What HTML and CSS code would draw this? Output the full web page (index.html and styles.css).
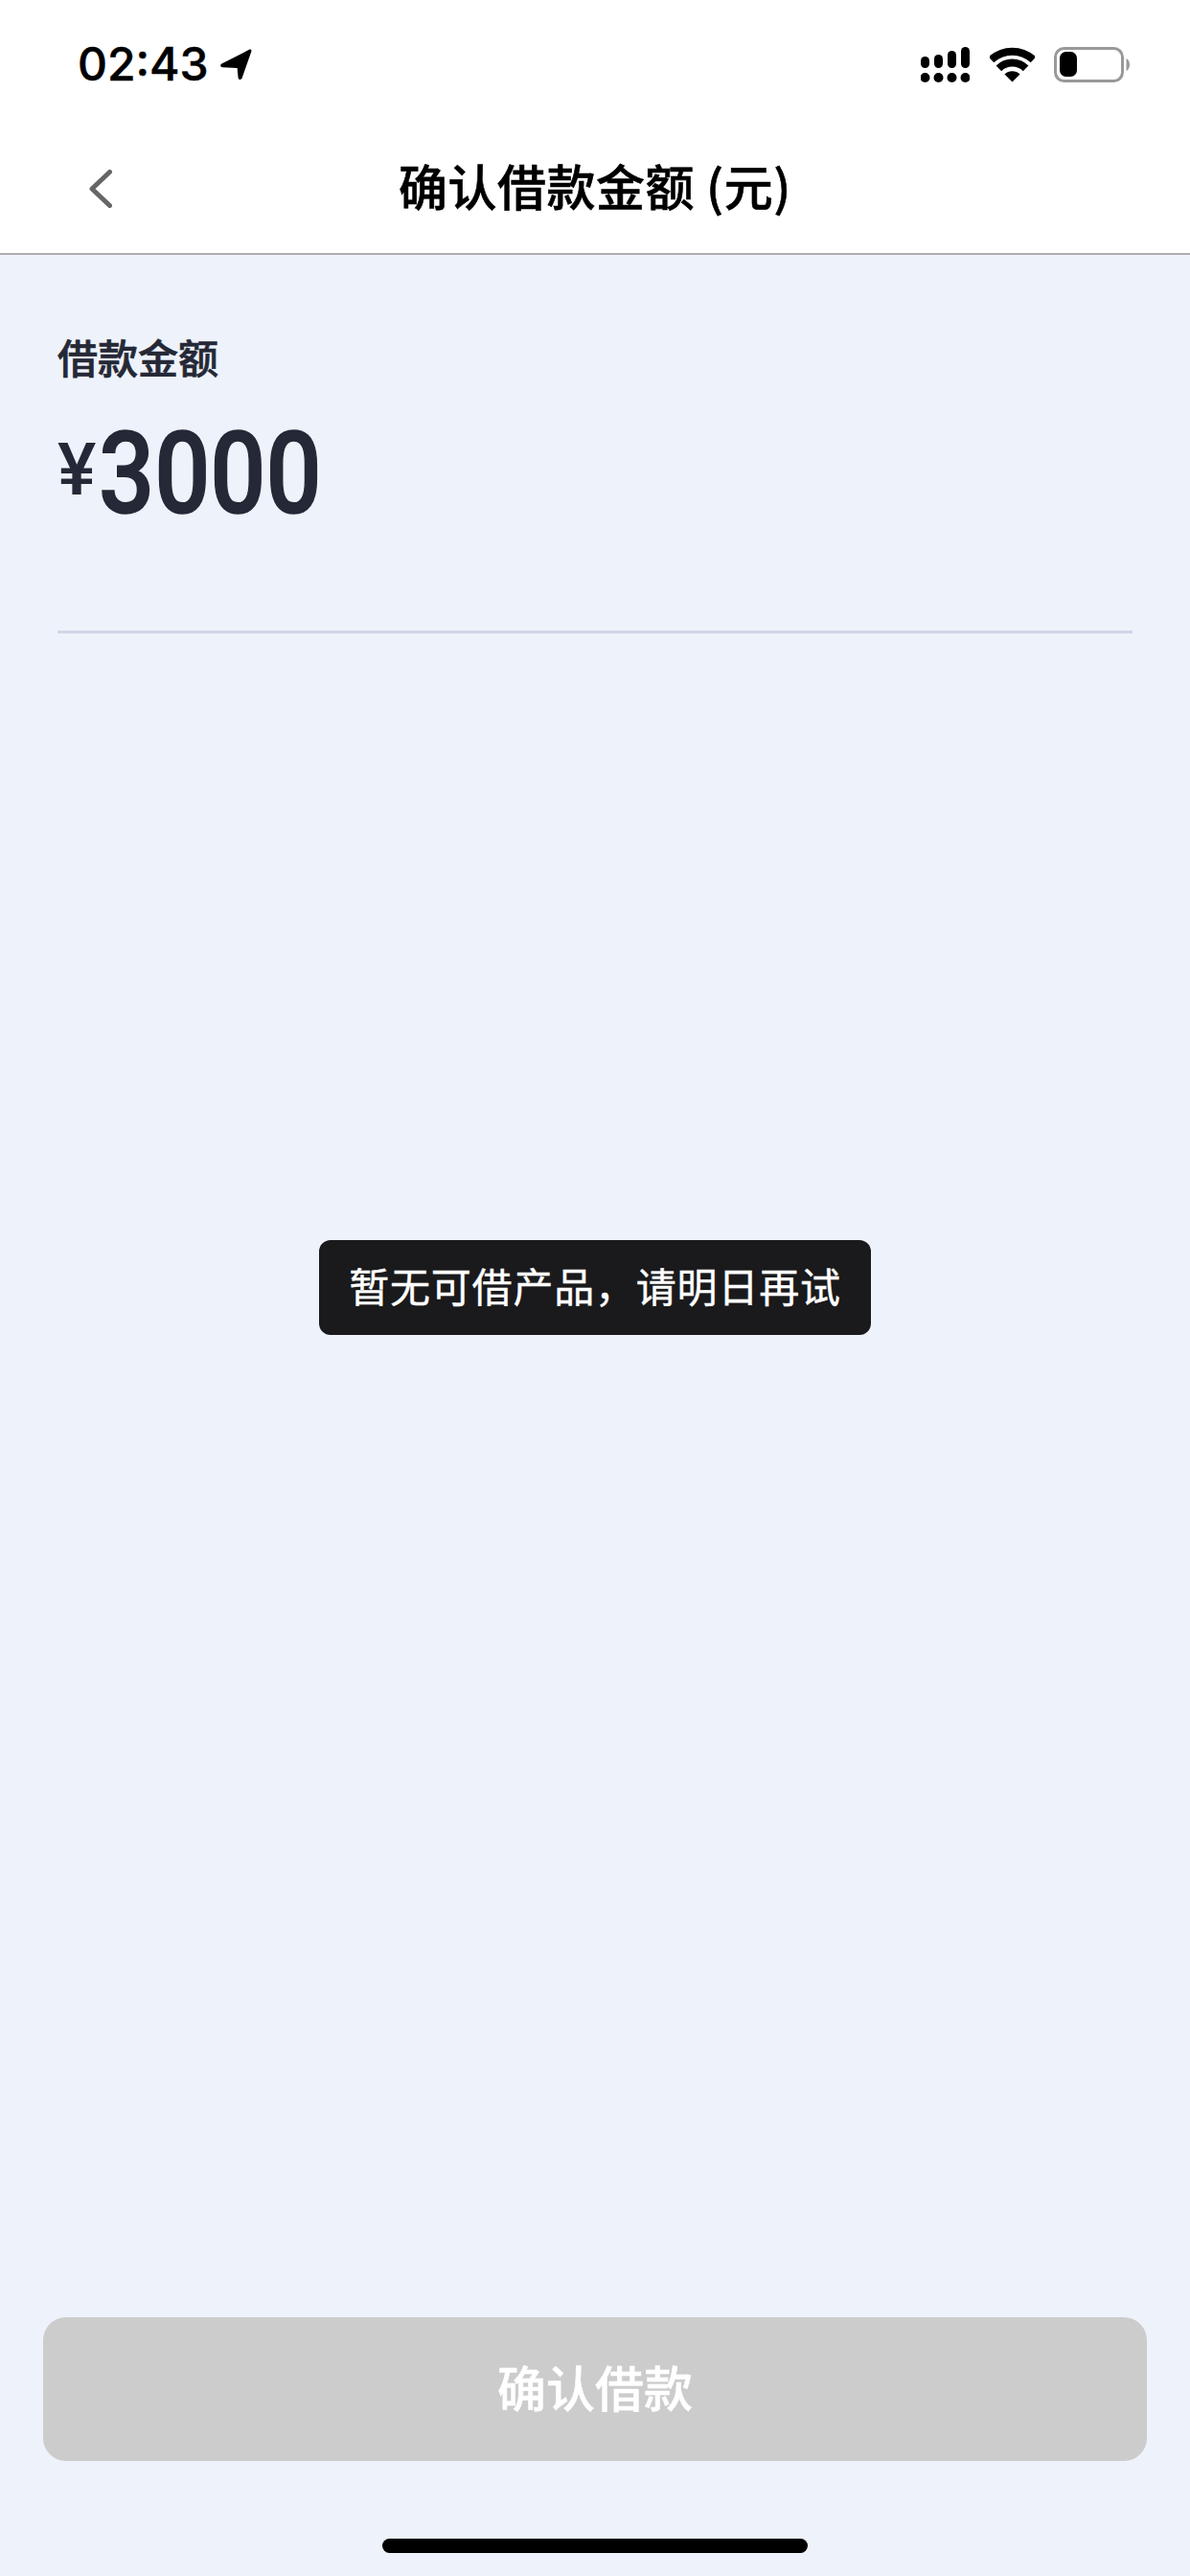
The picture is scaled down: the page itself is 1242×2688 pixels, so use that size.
FILE: index.html
```html
<!DOCTYPE html>
<html lang="zh-CN">
<head>
<meta charset="utf-8">
<title>确认借款金额 (元)</title>
<link rel="stylesheet" href="styles.css">
</head>
<body>
<div class="page">
  <header class="top">
    <div class="status">
      <div class="status-left">
        <span class="time">02:43</span>
        <svg class="loc" width="33" height="33" viewBox="0 0 33 33"><path d="M30.5 0.6 C31.8 0.2 32.8 1.2 32.4 2.5 L22.6 30.6 C21.9 32.6 18.9 32.6 18.6 30.3 L17.6 20 L2.2 19.2 C0 19 -0.6 16.5 1.4 15.4 Z" fill="#000"/></svg>
      </div>
      <div class="status-right">
        <svg class="signal" width="51" height="37" viewBox="0 0 51 37" fill="#000">
          <rect x="0" y="10" width="9" height="12" rx="4.5"/>
          <rect x="14" y="8" width="9" height="14" rx="4.5"/>
          <rect x="28" y="4" width="9" height="18" rx="4.5"/>
          <rect x="42" y="0" width="9" height="22" rx="4.5"/>
          <circle cx="4.5" cy="32" r="5"/>
          <circle cx="18.5" cy="32" r="5"/>
          <circle cx="32.5" cy="32" r="5"/>
          <circle cx="46.5" cy="32" r="5"/>
        </svg>
        <svg class="wifi" width="47" height="37" viewBox="0 0 47 37">
          <path d="M1.5 13.4 A32 32 0 0 1 45.5 13.4" fill="none" stroke="#000" stroke-width="8"/>
          <path d="M9.4 22.4 A20 20 0 0 1 37.6 22.4" fill="none" stroke="#000" stroke-width="8"/>
          <path d="M23.5 36.5 L15.5 28.5 A11.5 11.5 0 0 1 31.5 28.5 Z" fill="#000"/>
        </svg>
        <svg class="battery" width="79" height="37" viewBox="0 0 79 37">
          <rect x="1.5" y="1.5" width="70" height="34" rx="9" fill="#fff" stroke="#999" stroke-width="3"/>
          <rect x="6" y="5" width="18" height="26" rx="6.5" fill="#000"/>
          <path d="M75.5 12 C77.8 13 79 15.6 79 18.5 C79 21.4 77.8 24 75.5 25 Z" fill="#999"/>
        </svg>
      </div>
    </div>
    <nav class="nav">
      <svg class="back" width="24" height="40" viewBox="0 0 24 40"><path d="M21.5 2.5 L3 20 L21.5 37.5" fill="none" stroke="#666" stroke-width="5" stroke-linecap="round" stroke-linejoin="round"/></svg>
      <h1 class="title">确认借款金额 (元)</h1>
    </nav>
  </header>

  <main class="content">
    <section class="amount">
      <div class="label">借款金额</div>
      <div class="value"><span class="yen">¥</span><span class="num">3000</span></div>
    </section>
  </main>

  <footer class="bottom">
    <button class="confirm" type="button"><span class="confirm-text">确认借款</span></button>
    <div class="home-bar"></div>
  </footer>

  <div class="toast"><span class="toast-text">暂无可借产品，请明日再试</span></div>
</div>
</body>
</html>
```
FILE: styles.css
```css
* { box-sizing: border-box; }
html, body { margin: 0; padding: 0; }
body {
  width: 1242px;
  height: 2688px;
  overflow: hidden;
  font-family: "Noto Sans CJK SC", "Liberation Sans", sans-serif;
  background: #eef2fa;
}
.page {
  position: relative;
  width: 1242px;
  height: 2688px;
  display: flex;
  flex-direction: column;
}
.top {
  background: #fff;
  border-bottom: 2px solid #aeaeae;
  height: 266px;
}
.status {
  height: 134px;
  display: flex;
  justify-content: space-between;
  align-items: center;
  padding: 0 63px 0 81px;
}
.status-left { display: flex; align-items: center; gap: 12px; }
.time {
  font-family: Inter, "Liberation Sans", sans-serif;
  font-size: 48px;
  font-weight: 500;
  -webkit-text-stroke: 0.5px #000;
  line-height: 1;
  color: #000;
}
.status-right { display: flex; align-items: center; }
.wifi { margin-left: 21px; }
.battery { margin-left: 20px; }
.loc, .signal, .wifi, .battery { display: block; }
.nav {
  position: relative;
  height: 130px;
  padding: 0 0 4px 93px;
  display: flex;
  align-items: center;
}
.back { display: block; }
.title {
  position: absolute;
  left: 0;
  right: 0;
  top: 24px;
  margin: 0;
  text-align: center;
  font-size: 51px;
  letter-spacing: 0.5px;
  line-height: 70px;
  font-weight: 500;
  -webkit-text-stroke: 0.6px #000;
  color: #000;
}
.content {
  flex: 1;
  padding: 0 60px;
}
.amount {
  height: 395px;
  border-bottom: 3px solid #d1d5e9;
  padding-top: 75px;
}
.label {
  font-size: 42px;
  line-height: 62px;
  font-weight: 500;
  -webkit-text-stroke: 0.7px #252836;
  color: #252836;
}
.value {
  display: flex;
  align-items: baseline;
  margin-top: 32px;
  color: #252836;
  line-height: 120px;
}
.yen {
  font-family: Roboto, sans-serif;
  font-size: 76px;
  font-weight: 500;
  width: 43px;
  position: relative;
  top: -19px;
}
.num {
  display: inline-block;
  font-family: Roboto, sans-serif;
  font-size: 119px;
  font-weight: 500;
  -webkit-text-stroke: 1.5px #252836;
  transform: scaleX(0.86);
  transform-origin: left center;
}
.bottom {
  padding: 0 45px 24px;
  display: flex;
  flex-direction: column;
  align-items: center;
}
.confirm {
  width: 1152px;
  height: 150px;
  border: 0;
  padding: 0;
  border-radius: 24px;
  background: #ccc;
  color: #fff;
  font-family: inherit;
  font-size: 51px;
  font-weight: 500;
  -webkit-text-stroke: 0.5px #fff;
}
.confirm-text { position: relative; top: -3px; }
.home-bar {
  margin-top: 81px;
  width: 444px;
  height: 15px;
  border-radius: 8px;
  background: #000;
}
.toast {
  position: absolute;
  left: 333px;
  top: 1294px;
  width: 576px;
  height: 99px;
  display: flex;
  align-items: center;
  justify-content: center;
  border-radius: 12px;
  background: #1a1a1c;
  color: #fff;
  font-size: 42px;
  letter-spacing: 0.8px;
  -webkit-text-stroke: 0.4px #fff;
  white-space: nowrap;
}
.toast-text { position: relative; top: -3px; }
```
